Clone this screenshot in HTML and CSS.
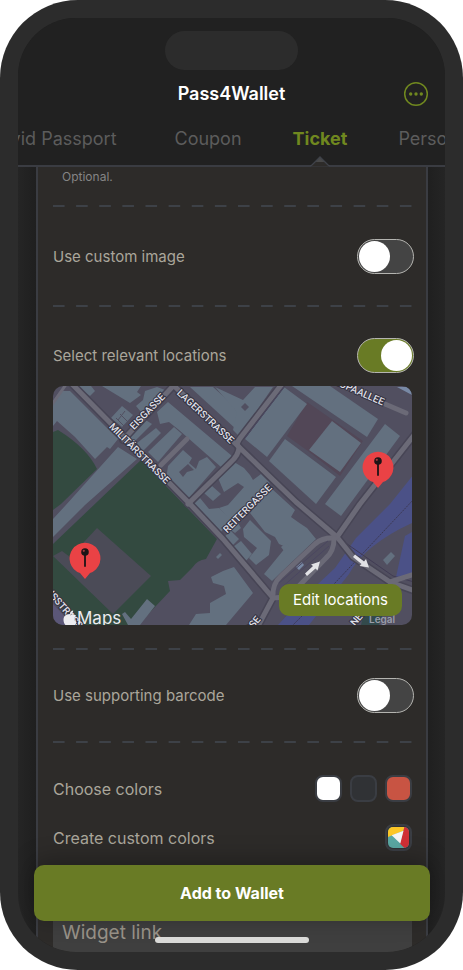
FILE: index.html
```html
<!DOCTYPE html>
<html lang="en">
<head>
<meta charset="utf-8">
<meta name="viewport" content="width=device-width, initial-scale=1">
<title>Pass4Wallet</title>
<link rel="stylesheet" href="styles.css">
</head>
<body>
<div class="phone">
  <div class="screen">
    <header class="header">
      <div class="island"></div>
      <div class="titlebar">
        <h1 class="title">Pass4Wallet</h1>
        <button class="more" type="button" aria-label="More">
          <svg width="26" height="26" viewBox="0 0 26 26">
            <circle cx="13" cy="13" r="11.3" fill="none" stroke="#70881f" stroke-width="1.5"/>
            <g fill="#70881f"><circle cx="7.7" cy="13" r="1.7"/><circle cx="13" cy="13" r="1.7"/><circle cx="18.3" cy="13" r="1.7"/></g>
          </svg>
        </button>
      </div>
      <nav class="tabs">
        <a class="tab tab-wide" href="#covid">Covid Passport</a>
        <a class="tab" href="#coupon">Coupon</a>
        <a class="tab tab-active" href="#ticket">Ticket
          <svg class="tab-arrow" width="20" height="11" viewBox="0 0 20 11">
            <path d="M0.5 10.5 L10 1 L19.5 10.5 Z" fill="#2d2b29"/>
            <path d="M5 6 L10 1 L15 6 Z" fill="#484848"/>
            <path d="M0 10 L1.5 9.5 L10 1 L18.5 9.5 L20 10" fill="none" stroke="#3f4249" stroke-width="1.4"/>
          </svg>
        </a>
        <a class="tab" href="#personal">Personal</a>
      </nav>
    </header>

    <main class="card">
      <p class="hint">Optional.</p>
      <div class="dash"></div>
      <div class="row row-tall">
        <label for="custom-image">Use custom image</label>
        <input class="switch" type="checkbox" role="switch" id="custom-image">
      </div>
      <div class="dash"></div>
      <section class="locations">
        <div class="row">
          <label for="locations">Select relevant locations</label>
          <input class="switch" type="checkbox" role="switch" id="locations" checked>
        </div>
        <div class="map">
          <svg class="map-art" viewBox="0 0 359 239" preserveAspectRatio="xMidYMid slice">
            <rect width="359" height="239" fill="#514f60"/>
            <g fill="#4b5187">
              <path d="M361 88 L337 118 L303 152 L282 182 L250 212 L225 239 L256 239 L296 188 Q312 158 361 136 Z"/>
              <path d="M352 150 L361 145 L361 188 L343 191 Z"/>
            </g>
            <path d="M361 113 L282 197 L240 239" fill="none" stroke="#3d3a55" stroke-width="1" stroke-dasharray="2 1"/>
            <path d="M284 151 L340 190 L361 196" fill="none" stroke="#413c54" stroke-width="1"/>
            <g fill="#334a40">
              <path d="M0 46 L5 44 Q34 62 44 83 L8 118 L0 124 Z"/>
              <path d="M88 74 L164 153 L153 173 Q144 174 139 182 L127 194 L115 195 L117 205 L85 239 L24 239 L0 212 L0 158 Z"/>
            </g>
            <path d="M44 142 L98 190 L60 228 L0 170 L9 165 L17 171 Z" fill="#4b4b57"/>
            <path d="M254 16 L310 55 L287 90 L255 65 L234 50 Z" fill="#524757"/>
            <g fill="#63707f">
              <path d="M7 5 L17 5 L65 53 L57 63 L54 61 L42 73 L22 51 L4 35 L0 40 L0 15 Z"/>
              <path d="M22 0 L38 0 L42 5 L37 10 Z"/>
              <path d="M49 0 L88 0 L84 6 L88 9 L77 17 Z"/>
              <path d="M92 5 L104 1 L112 4 L88 26 L83 20 L90 14 Z"/>
              <path d="M69 20 L80 29 L69 41 L58 32 Z"/>
              <path d="M80 41 L91 33 L99 38 L80 57 L74 52 Z"/>
              <path d="M84 57 L103 42 L108 47 L90 65 Z"/>
              <path d="M95 66 L121 41 L129 48 L105 76 Z"/>
              <path d="M104 26 L115 16 L179 70 L168 81 L126 44 L116 36 L107 38 Z"/>
              <path d="M65 61 L84 73 L32 119 L0 151 L0 133 L12 120 Z"/>
              <path d="M137 1 L160 1 L188 26 L184 44 Z"/>
              <path d="M162 1 L190 14 L202 1 L220 1 L186 50 L180 44 L184 26 Z"/>
              <path d="M130 64 L139 72 L136 77 L143 83 L146 75 L154 71 L163 81 L135 113 L113 93 L115 80 Z"/>
              <path d="M165 92 L181 76 L191 82 L197 89 L200 94 L208 88 L217 97 L172 143 L176 133 L166 122 L175 119 L191 101 L185 97 L171 106 Z"/>
              <path d="M151 107 L159 100 L168 108 L160 115 Z"/>
              <path d="M140 119 L147 112 L156 123 L166 122 L177 133 L168 146 Z"/>
              <path d="M197 127 L218 102 L242 124 L238 131 L245 136 L254 142 L263 153 L219 195 L211 188 L233 161 L226 158 L222 151 L212 146 Z"/>
              <path d="M190 143 L197 134 L218 155 L216 169 L203 179 L196 172 L204 162 L191 151 Z"/>
              <path d="M171 151 L178 145 L186 153 L179 160 Z"/>
              <path d="M180 161 L188 155 L199 168 L192 176 Z"/>
              <path d="M178 144 L185 137 L188 142 L182 147 Z"/>
              <path d="M231 1 L254 18 L214 71 L192 53 Z"/>
              <path d="M239 0 L277 0 L325 33 L314 51 Z"/>
              <path d="M279 35 L308 57 L287 86 L256 64 Z"/>
              <path d="M232 53 L283 91 L263 118 L216 75 Z"/>
              <path d="M332 38 L347 50 L288 130 L272 118 Z"/>
              <path d="M158 191 L170 185 L181 181 L200 207 L173 239 L136 239 L143 228 L157 227 L157 217 L173 208 L171 200 L160 197 Z"/>
              <path d="M94 213 L102 220 L87 239 L75 239 L69 228 L72 226 L78 233 Z"/>
              <path d="M330 174 L338 166 L342 170 L334 179 Z"/>
              <path d="M163 171 L167 167 L169 169 L165 173 Z"/>
            </g>
            <path d="M243 181 L249 176 L251 179 L246 184 Z M344 1 L359 1 L359 9 Z" fill="#7889a5"/>
            <g fill="#514f60">
              <path d="M188 21 L192 17 L196 21 L192 25 Z"/>
              <path d="M126 86 L135 78 L141 84 L134 86 L130 91 Z"/>
              <path d="M228 161 L233 157 L236 160 L231 165 Z" fill="#63707f"/>
            </g>
            <path d="M63 32 L71 40 M67 28 L75 36 M65 34 L72 25" fill="none" stroke="#514f60" stroke-width="1"/>
            <g fill="none" stroke="#474555" stroke-width="8" stroke-linecap="round" stroke-linejoin="round">
              <path d="M18 -3 L137 118 L170 153 L220 212 L204 242"/>
              <path d="M122 -2 L70 54"/>
              <path d="M119 -2 L185 60 L243 116 L284 151 L300 171 L337 196 L362 205"/>
              <path d="M229 -2 L188 51 Q182 58 186 61 Q186 69 177 77 L135 118"/>
              <path d="M362 48 L307 118 L284 151"/>
            </g>
            <g fill="none" stroke="#6b6a77" stroke-width="5" stroke-linecap="round" stroke-linejoin="round">
              <path d="M18 -3 L137 118 L170 153 L220 212 L204 242"/>
              <path d="M122 -2 L70 54"/>
              <path d="M119 -2 L185 60 L243 116 L284 151 L300 171 L337 196 L362 205"/>
              <path d="M229 -2 L188 51 Q182 58 186 61 Q186 69 177 77 L135 118"/>
              <path d="M134 53 L108 79"/>
              <path d="M362 48 L307 118 L284 151"/>
              <path d="M282 152 Q270 151 262 158 L228 190 Q219 198 220 211"/>
              <path d="M281 153 Q281 165 273 172 L244 202 Q234 212 220 212"/>
              <path d="M332 18 L353 27"/>
              <path d="M-2 20 L12 0" stroke-width="3"/>
              <path d="M337 196 L362 188"/>
            </g>
            <path d="M231 1 L192 52 M226 197 L275 155 M276 160 L228 202" fill="none" stroke="#4b4760" stroke-width="1"/>
            <path d="M0 218 L20 239 L0 239 Z" fill="#5b5778"/>
            <path d="M310 230 L330 228 L326 239 L308 239 Z" fill="#334a4c"/>
            <g fill="#e2e2e6">
              <path d="M252 187.500 L260 180 L258 178.500 L267 175.500 L264.500 184.500 L262.500 182.500 L254 190 Z"/>
              <path d="M302 168.500 L311 175.500 L313 173 L316 181.500 L306.500 180 L308.500 178 L300 171 Z"/>
            </g>
            <g class="street">
              <text transform="translate(94 25) rotate(-46)" y="4" text-anchor="middle">EISGASSE</text>
              <text transform="translate(87 67) rotate(45)" y="4" text-anchor="middle">MILITÄRSTRASSE</text>
              <text transform="translate(153 30) rotate(43)" y="4" text-anchor="middle">LAGERSTRASSE</text>
              <text transform="translate(194 122) rotate(-45)" y="4" text-anchor="middle">REITERGASSE</text>
              <text transform="translate(331 16) rotate(24)" y="4" text-anchor="end">EUROPAALLEE</text>
              <text transform="translate(-2 206) rotate(49)" y="4">ISSTRASSE</text>
              <text transform="translate(205 231) rotate(-50)" y="4" text-anchor="end">GASSE</text>
              <text transform="translate(299 238) rotate(-50)" y="4">NER</text>
            </g>
            <g transform="translate(32 172)">
              <path d="M0 21 L-5 15 A15.500 15.500 0 1 1 5 15 Z" fill="#ea4245"/>
              <path d="M0 -4 V8" stroke="#1c1416" stroke-width="1.8" stroke-linecap="round"/>
              <circle cy="-6" r="3.8" fill="#1c1416"/>
              <circle cx="-1.200" cy="-7.200" r="1.100" fill="#a33a3e"/>
            </g>
            <g transform="translate(325 81)">
              <path d="M0 21 L-5 15 A15.500 15.500 0 1 1 5 15 Z" fill="#ea4245"/>
              <path d="M0 -4 V8" stroke="#1c1416" stroke-width="1.8" stroke-linecap="round"/>
              <circle cy="-6" r="3.8" fill="#1c1416"/>
              <circle cx="-1.200" cy="-7.200" r="1.100" fill="#a33a3e"/>
            </g>
            <g fill="#ececf0">
              <path d="M17.500 229.200 C19 228.200 21.800 228 23.200 230 C20.500 231.500 20.800 235 23.500 236.200 C22.800 238.200 21.500 240 20 240 C18.800 240 18.500 239.300 17.200 239.300 C16 239.300 15.500 240 14.500 240 C12.300 240 10.500 236.800 10.500 233.800 C10.500 229 14.800 227.500 17.500 229.200 Z"/>
              <path d="M17 228 C16.800 226 18.500 224.800 20.200 224.600 C20.400 226.500 18.800 228.200 17 228 Z"/>
            </g>
            <text class="maps-word" x="24" y="238">Maps</text>
            <text class="legal" x="316" y="237">Legal</text>
          </svg>
          <button class="edit" type="button">Edit locations</button>
        </div>
      </section>
      <div class="dash"></div>
      <div class="row row-mid">
        <label for="barcode">Use supporting barcode</label>
        <input class="switch" type="checkbox" role="switch" id="barcode">
      </div>
      <div class="dash"></div>
      <section class="colors">
        <div class="row">
          <span>Choose colors</span>
          <div class="swatches">
            <button class="swatch swatch-white" type="button" aria-label="White"></button>
            <button class="swatch swatch-dark" type="button" aria-label="Dark"></button>
            <button class="swatch swatch-red" type="button" aria-label="Red"></button>
          </div>
        </div>
        <div class="row">
          <span>Create custom colors</span>
          <button class="swatch" type="button" aria-label="Custom colors">
            <svg class="swatch-art" viewBox="0 0 23 23">
              <rect width="23" height="23" fill="#5aa7a2"/>
              <path d="M0 0 H18 L17 4 L0 11 Z" fill="#fcc626"/>
              <path d="M18 0 H23 V23 H18 L13 18 Z" fill="#d02f35"/>
              <path d="M4 9 L17 4 L13.500 18 Z" fill="#f4f4f4"/>
            </svg>
          </button>
        </div>
      </section>
      <input class="field" type="text" placeholder="Widget link" aria-label="Widget link">
    </main>

    <button class="add" type="button">Add to Wallet</button>
    <div class="home"></div>
  </div>
</div>
</body>
</html>
```
FILE: styles.css
```css
* { box-sizing: border-box; }

body {
  margin: 0;
  background: #fff;
  font-family: Inter, "Liberation Sans", sans-serif;
}

button { font-family: inherit; border: 0; padding: 0; cursor: pointer; }

.phone {
  height: 100vh;
  min-height: 600px;
  padding: 18px;
  border-radius: 78px;
  background: #2c2c2c;
}

.screen {
  position: relative;
  height: 100%;
  display: flex;
  flex-direction: column;
  overflow: hidden;
  border-radius: 58px;
  background: linear-gradient(90deg, #252525, #1f1f1f 18px calc(100% - 18px), #252525);
}

.header {
  flex: none;
  padding-top: 13px;
  border-bottom: 2px solid #3a3c42;
  background: #212121;
}

.island {
  width: 133px;
  height: 39px;
  margin: 0 auto;
  border-radius: 20px;
  background: #2c2c2c;
}

.titlebar {
  display: grid;
  grid-template-columns: 26px 1fr 26px;
  align-items: center;
  padding: 11px 16px 0;
}

.title {
  grid-column: 2;
  margin: 0;
  font-size: 18px;
  line-height: 26px;
  font-weight: 600;
  text-align: center;
  color: #fff;
}

.more { height: 26px; background: none; }

.tabs {
  display: flex;
  gap: 51px;
  margin-left: -31px;
}

.tab {
  position: relative;
  flex: none;
  padding: 20px 0 14px;
  font-size: 18px;
  line-height: 24px;
  color: #5c5c5c;
  text-decoration: none;
}

.tab-wide { margin-right: 7px; }

.tab-active { font-weight: 700; color: #70881f; }

.tab-arrow {
  position: absolute;
  left: 50%;
  bottom: -2px;
  margin-left: -10px;
}

.card {
  flex: 1;
  min-height: 0;
  overflow: hidden;
  margin: 0 17px 0 18px;
  padding: 0 14px 0 15px;
  border: solid #3a3c42;
  border-width: 0 2px;
  background: #2d2b29;
  color: #aaa69b;
  font-size: 16px;
}

.card label { font-size: 15px; }

.hint {
  margin: 0;
  padding: 2px 9px 20px;
  font-size: 12px;
  line-height: 16px;
  color: #858585;
}

.dash {
  height: 2px;
  margin-right: -11px;
  background: linear-gradient(90deg, #3d4147 12px, transparent 12px) 0 0 / 23px 2px round;
}

.row {
  display: flex;
  align-items: center;
  justify-content: space-between;
}

.row-tall { height: 98px; }
.row-mid { height: 91px; }

.switch {
  appearance: none;
  flex: none;
  width: 57px;
  height: 35px;
  margin: 0 -2px 0 0;
  padding: 1px;
  display: flex;
  border: 1px solid #b4b4b0;
  border-radius: 18px;
  background: #444;
  cursor: pointer;
}

.switch::before {
  content: "";
  width: 31px;
  height: 31px;
  border-radius: 50%;
  background: #fff;
}

.switch:checked { justify-content: flex-end; background: #697b25; }

.locations {
  display: grid;
  gap: 13px;
  padding: 31px 0 23px;
}

.map {
  position: relative;
  height: 239px;
  overflow: hidden;
  border-radius: 10px;
}

.map-art { display: block; width: 100%; height: 100%; }

.street {
  font-family: Roboto, Inter, sans-serif;
  font-size: 10px;
  font-weight: 500;
  fill: #dfdfe6;
  stroke: #34333f;
  stroke-width: 2px;
  paint-order: stroke;
}

.maps-word { font-size: 17px; fill: #ececf0; }
.legal { font-size: 10px; font-weight: 600; fill: #9a9daa; }

.edit {
  position: absolute;
  right: 10px;
  bottom: 9px;
  padding: 0 14px;
  border-radius: 10px;
  background: #697b25;
  color: #fff;
  font-size: 15px;
  line-height: 32px;
}

.colors {
  display: grid;
  gap: 22px;
  padding: 32px 0 22px;
}

.swatches { display: flex; gap: 8px; }

.swatch {
  width: 27px;
  height: 27px;
  padding: 1px;
  border: 2px solid #3a3d43;
  border-radius: 8px;
  background: #303235;
}

.swatch-white { background: #fff; }
.swatch-red { background: #c85443; }

.swatch-art { display: block; width: 100%; height: 100%; border-radius: 5px; }

.field {
  display: block;
  width: 100%;
  height: 80px;
  padding: 39px 9px 0;
  border: 0;
  background: #3f3f3f;
  color: #aaa69b;
  font: 19px Inter, sans-serif;
}

.field::placeholder { color: #999389; opacity: 1; }

.add {
  position: absolute;
  left: 16px;
  right: 15px;
  bottom: 31px;
  height: 56px;
  border-radius: 10px;
  background: #697b25;
  box-shadow: 0 -4px 24px rgba(0, 0, 0, 0.3);
  color: #fff;
  font-size: 16px;
  font-weight: 700;
}

.home {
  position: absolute;
  left: 137px;
  right: 136px;
  bottom: 9px;
  height: 6px;
  border-radius: 3px;
  background: #dadad8;
}
```
